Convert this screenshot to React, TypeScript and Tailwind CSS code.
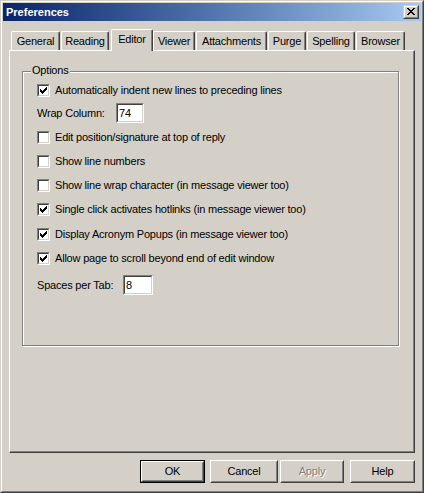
import React from "react";

const tabs = [
  { label: "General", w: 49, ml: 0 },
  { label: "Reading", w: 48, ml: 1 },
  { label: "Editor", w: 42, ml: 2, active: true },
  { label: "Viewer", w: 42, ml: 0 },
  { label: "Attachments", w: 71, ml: 1 },
  { label: "Purge", w: 38, ml: 1 },
  { label: "Spelling", w: 48, ml: 1 },
  { label: "Browser", w: 49, ml: 1 },
];

// classic 7x7 check glyph, one entry per run of pixels
const checkPixels = [
  [6, 0, 1], [5, 1, 2], [0, 2, 1], [4, 2, 3], [0, 3, 2], [3, 3, 3], [0, 4, 5], [1, 5, 3], [2, 6, 1],
];

// close glyph, 8x7
const closePixels = [
  [0, 0, 2], [6, 0, 2], [1, 1, 2], [5, 1, 2], [2, 2, 4], [3, 3, 2], [2, 4, 4], [1, 5, 2], [5, 5, 2], [0, 6, 2], [6, 6, 2],
];

function Sunken({ className, children }: { className: string; children?: React.ReactNode }) {
  return (
    <div className={`border border-t-[#808080] border-l-[#808080] border-r-white border-b-white ${className}`}>
      <div className="w-full h-full border border-t-[#404040] border-l-[#404040] border-r-[#d4d0c8] border-b-[#d4d0c8] bg-white">
        {children}
      </div>
    </div>
  );
}

function CheckRow({ label, checked, mt }: { label: string; checked?: boolean; mt: string }) {
  return (
    <div className={`flex items-center gap-[5px] h-[13px] ${mt}`}>
      <Sunken className="w-[13px] h-[13px] shrink-0">
        {checked && (
          <svg width="9" height="9" viewBox="0 0 9 9" shapeRendering="crispEdges">
            {checkPixels.map(([x, y, w], i) => (
              <rect key={i} x={x + 1} y={y + 1} width={w} height={1} fill="#000" />
            ))}
          </svg>
        )}
      </Sunken>
      <span className="leading-[13px] whitespace-nowrap">{label}</span>
    </div>
  );
}

function Button({ label, w, ml, isDefault, disabled }: { label: string; w: string; ml: string; isDefault?: boolean; disabled?: boolean }) {
  const inner = (
    <div className="w-full h-full border border-t-white border-l-white border-r-[#404040] border-b-[#404040]">
      <div className="w-full h-full border border-transparent border-r-[#808080] border-b-[#808080] flex items-center justify-center">
        <span className={disabled ? "text-[#808080] [text-shadow:1px_1px_0_#fff]" : ""}>{label}</span>
      </div>
    </div>
  );
  return (
    <div className={`h-[23px] ${w} ${ml} ${isDefault ? "border border-black" : ""}`}>
      {inner}
    </div>
  );
}

export default function App() {
  return (
    <div className="w-[424px] h-[493px] bg-[#d4d0c8] border border-t-[#d4d0c8] border-l-[#d4d0c8] border-r-[#404040] border-b-[#404040] font-['Liberation_Sans',Arial,sans-serif] text-[11px] tracking-[-0.2px] text-black select-none">
      <div className="h-full border border-t-white border-l-white border-r-[#808080] border-b-[#808080] p-px flex flex-col">
        {/* Title bar */}
        <div className="h-[18px] flex items-center justify-between bg-gradient-to-r from-[#0a246a] to-[#a6caf0] pl-[3px] pr-[2px]">
          <span className="font-bold text-white leading-none tracking-normal">Preferences</span>
          <div className="w-[16px] h-[14px] border border-t-[#d4d0c8] border-l-[#d4d0c8] border-r-[#404040] border-b-[#404040] bg-[#d4d0c8]">
            <div className="w-full h-full border border-t-white border-l-white border-r-[#808080] border-b-[#808080] pl-[2px] pt-[1px]">
              <svg width="8" height="7" viewBox="0 0 8 7" shapeRendering="crispEdges" className="block">
                {closePixels.map(([x, y, w], i) => (
                  <rect key={i} x={x} y={y} width={w} height={1} fill="#000" />
                ))}
              </svg>
            </div>
          </div>
        </div>

        {/* Tabs */}
        <div className="mt-[8px] mx-[6px] h-[21px] flex items-end pl-[2px]">
          {tabs.map((t) => (
            <div
              key={t.label}
              style={{ width: t.w, marginLeft: t.ml }}
              className={`flex items-center justify-center border-t border-l border-white border-r border-r-[#404040] shadow-[inset_-1px_0_0_#808080] rounded-t-[2px] bg-[#d4d0c8] whitespace-nowrap ${
                t.active ? "h-[22px] -mb-px relative z-10 pb-[2px]" : "h-[19px]"
              }`}
            >
              {t.label}
            </div>
          ))}
        </div>

        {/* Tab panel */}
        <div className="mx-[6px] h-[403px] border-t border-l border-white border-r border-b border-r-[#404040] border-b-[#404040] shadow-[inset_-1px_-1px_0_#808080]">
          <div className="relative ml-[12px] mt-[20px] w-[377px] h-[275px] border border-[#808080] shadow-[inset_1px_1px_0_#fff,1px_1px_0_#fff]">
            <span className="absolute left-[8px] -top-[8px] px-px bg-[#d4d0c8] leading-[13px]">Options</span>
            <div className="flex flex-col pl-[14px] pt-[12px]">
              <CheckRow checked label="Automatically indent new lines to preceding lines" mt="" />
              <div className="flex items-center h-[20px] mt-[6px]">
                <span className="w-[79px] whitespace-nowrap">Wrap Column:</span>
                <Sunken className="w-[28px] h-[20px]">
                  <div className="pl-[1px] leading-[16px]">74</div>
                </Sunken>
              </div>
              <CheckRow label="Edit position/signature at top of reply" mt="mt-[8px]" />
              <CheckRow label="Show line numbers" mt="mt-[11px]" />
              <CheckRow label="Show line wrap character (in message viewer too)" mt="mt-[11px]" />
              <CheckRow checked label="Single click activates hotlinks (in message viewer too)" mt="mt-[11px]" />
              <CheckRow checked label="Display Acronym Popups (in message viewer too)" mt="mt-[12px]" />
              <CheckRow checked label="Allow page to scroll beyond end of edit window" mt="mt-[11px]" />
              <div className="flex items-center h-[20px] mt-[10px]">
                <span className="w-[86px] whitespace-nowrap">Spaces per Tab:</span>
                <Sunken className="w-[30px] h-[20px]">
                  <div className="pl-[1px] leading-[16px]">8</div>
                </Sunken>
              </div>
            </div>
          </div>
        </div>

        {/* Buttons */}
        <div className="mt-[7px] flex justify-end pr-[6px]">
          <Button label="OK" w="w-[65px]" ml="" isDefault />
          <Button label="Cancel" w="w-[68px]" ml="ml-[5px]" />
          <Button label="Apply" w="w-[64px]" ml="ml-[2px]" disabled />
          <Button label="Help" w="w-[65px]" ml="ml-[6px]" />
        </div>
      </div>
    </div>
  );
}
